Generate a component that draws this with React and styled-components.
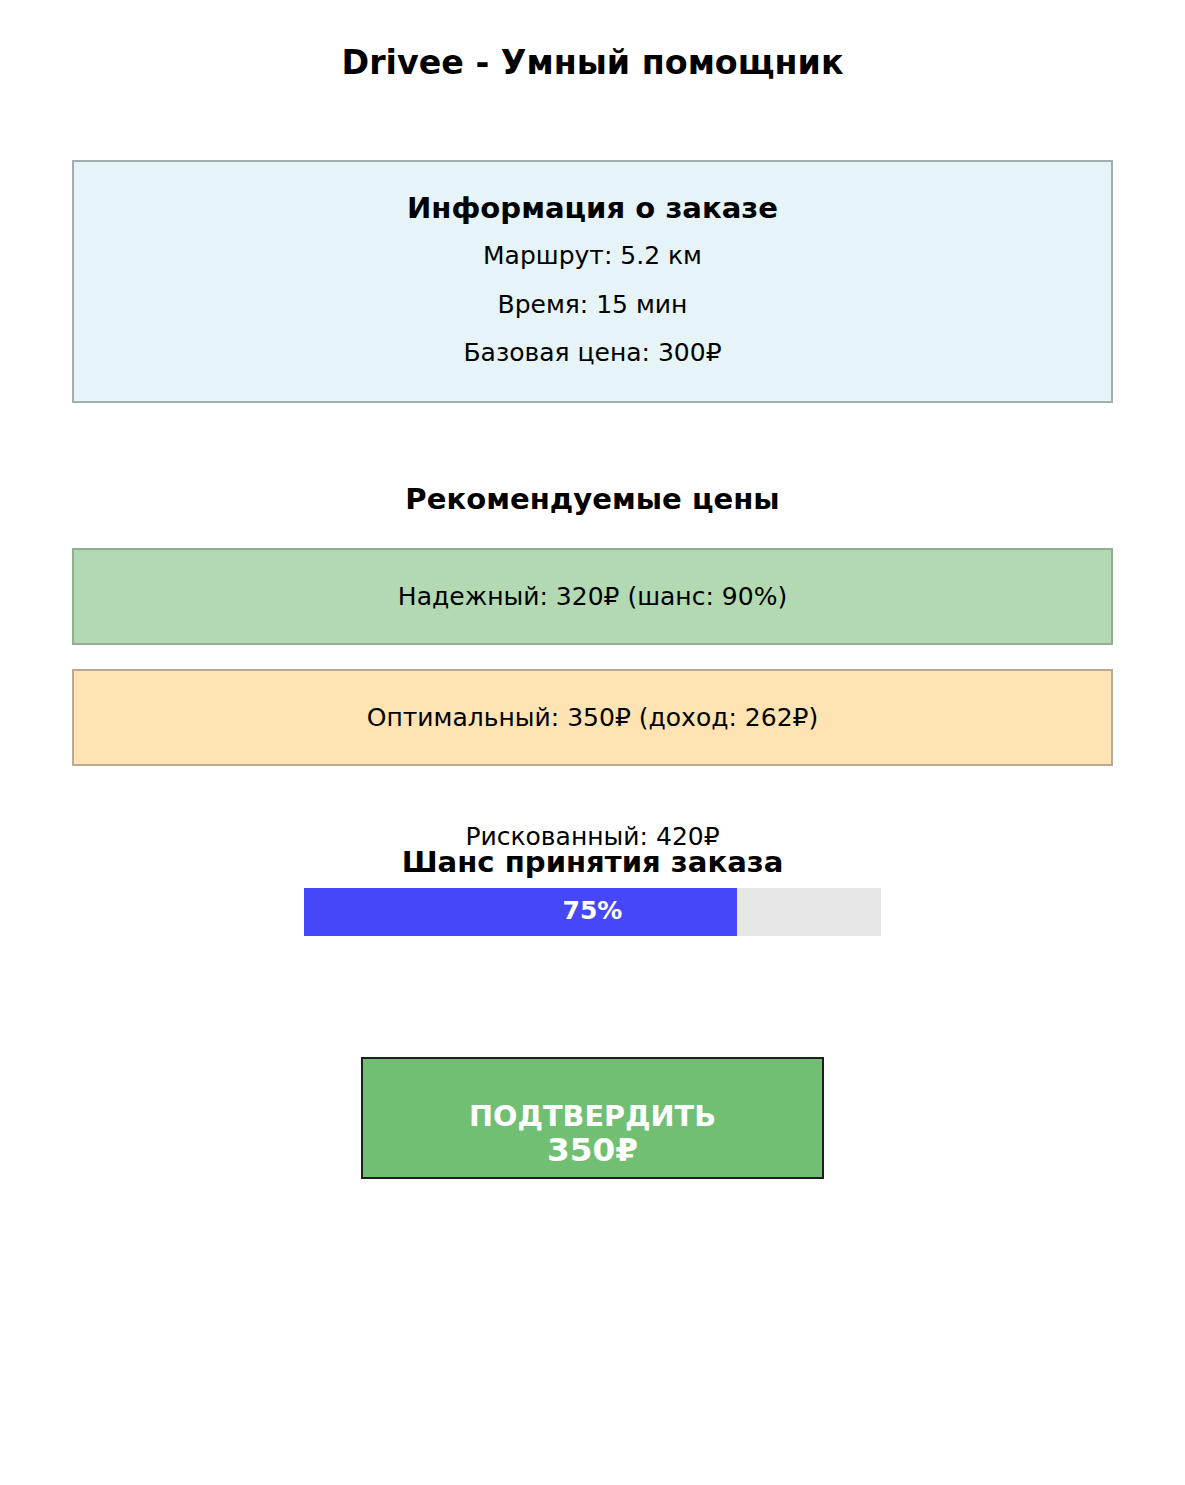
import React from "react";
import styled, { createGlobalStyle } from "styled-components";

const Global = createGlobalStyle`
  html, body { margin: 0; padding: 0; background: #fff; }
  body { font-family: "DejaVu Sans", "Liberation Sans", sans-serif; color: #000; }
`;

const Page = styled.div`
  width: 1185px;
  min-height: 1485px;
  display: flex;
  flex-direction: column;
  align-items: center;
`;

const Title = styled.h1`
  margin: 43px 0 0;
  font-size: 33.3px;
  font-weight: bold;
  line-height: 40px;
  text-align: center;
`;

const InfoCard = styled.section`
  box-sizing: border-box;
  align-self: stretch;
  margin: 77px 72px 0;
  height: 243px;
  padding-top: 22px;
  background: #e6f3f7;
  border: 2px solid #a3acaf;
  display: flex;
  flex-direction: column;
  align-items: center;
`;

const CardTitle = styled.h2`
  margin: 0;
  font-size: 29.1px;
  font-weight: bold;
  line-height: 48px;
`;

const InfoLine = styled.p`
  margin: 0;
  font-size: 25px;
  line-height: 48.5px;
`;

const SectionTitle = styled.h2`
  margin: ${(p) => p.$mt}px 0 0;
  font-size: 29.1px;
  font-weight: bold;
  line-height: ${(p) => p.$lh}px;
  text-align: center;
`;

const Option = styled.div`
  box-sizing: border-box;
  align-self: stretch;
  margin: ${(p) => p.$mt}px 72px 0;
  height: 97px;
  background: ${(p) => p.$bg};
  border: 2px solid ${(p) => p.$edge};
  display: flex;
  align-items: center;
  justify-content: center;
  font-size: 25px;
`;

const Plain = styled.div`
  margin-top: 60px;
  font-size: 25px;
  line-height: 22px;
`;

const Bar = styled.div`
  position: relative;
  margin-top: 12px;
  width: 577px;
  height: 48px;
  background: #e6e6e6;
`;

const Fill = styled.div`
  height: 100%;
  background: #4646fa;
`;

const BarLabel = styled.span`
  position: absolute;
  inset: 0 0 3px;
  display: flex;
  align-items: center;
  justify-content: center;
  color: #fff;
  font-weight: bold;
  font-size: 25px;
`;

const Confirm = styled.button`
  box-sizing: border-box;
  margin-top: 121px;
  width: 463px;
  height: 122px;
  padding: 43px 0 0;
  background: #70bf73;
  border: 2px solid #1e1e1e;
  border-radius: 0;
  color: #fff;
  font-family: inherit;
  font-weight: bold;
  display: flex;
  flex-direction: column;
  align-items: center;
  cursor: pointer;
`;

const ConfirmText = styled.span`
  font-size: 28.7px;
  line-height: 28px;
`;

const ConfirmPrice = styled.span`
  font-size: 32.7px;
  line-height: 40px;
`;

const options = [
  { text: "Надежный: 320₽ (шанс: 90%)", bg: "#b2d9b2", edge: "#93ad93", mt: 29 },
  { text: "Оптимальный: 350₽ (доход: 262₽)", bg: "#ffe3b2", edge: "#b9ab93", mt: 24 },
];

export default function App() {
  const chance = 75;
  return (
    <>
      <Global />
      <Page>
        <Title>Drivee - Умный помощник</Title>
        <InfoCard>
          <CardTitle>Информация о заказе</CardTitle>
          <InfoLine>Маршрут: 5.2 км</InfoLine>
          <InfoLine>Время: 15 мин</InfoLine>
          <InfoLine>Базовая цена: 300₽</InfoLine>
        </InfoCard>
        <SectionTitle $mt={76} $lh={40}>Рекомендуемые цены</SectionTitle>
        {options.map((o) => (
          <Option key={o.text} $mt={o.mt} $bg={o.bg} $edge={o.edge}>
            {o.text}
          </Option>
        ))}
        <Plain>Рискованный: 420₽</Plain>
        <SectionTitle $mt={0} $lh={28}>Шанс принятия заказа</SectionTitle>
        <Bar>
          <Fill style={{ width: `${chance}%` }} />
          <BarLabel>{chance}%</BarLabel>
        </Bar>
        <Confirm>
          <ConfirmText>ПОДТВЕРДИТЬ</ConfirmText>
          <ConfirmPrice>350₽</ConfirmPrice>
        </Confirm>
      </Page>
    </>
  );
}
